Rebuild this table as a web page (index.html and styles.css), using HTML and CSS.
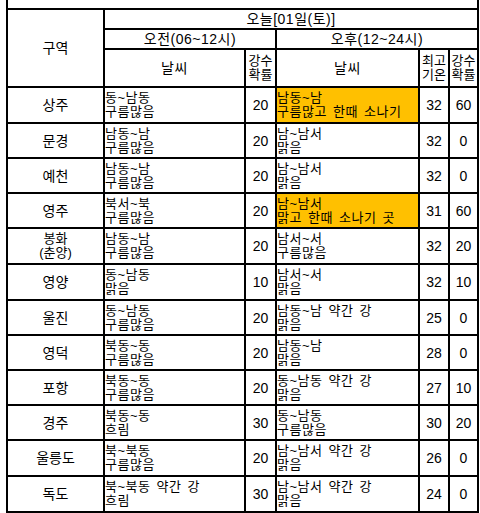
FILE: index.html
```html
<!DOCTYPE html>
<html lang="ko">
<head>
<meta charset="utf-8">
<title>오늘 날씨</title>
<link rel="stylesheet" href="styles.css">
</head>
<body>
<table class="wx">
  <colgroup>
    <col class="c-area"><col class="c-am"><col class="c-amp"><col class="c-pm"><col class="c-tmax"><col class="c-pmp">
  </colgroup>
  <tr class="r-cut"><td colspan="6"></td></tr>
  <tr class="r-h1"><th rowspan="3" class="area">구역</th><th colspan="5">오늘[01일(토)]</th></tr>
  <tr class="r-h2"><th colspan="2">오전(06~12시)</th><th colspan="3">오후(12~24시)</th></tr>
  <tr class="r-h3"><th>날씨</th><th class="narrow">강수<br>확률</th><th>날씨</th><th class="narrow">최고<br>기온</th><th class="narrow">강수<br>확률</th></tr>

  <tr class="r36"><td class="area">상주</td><td class="wt">동~남동<br>구름많음</td><td class="num">20</td><td class="wt hot">남동~남<br>구름많고 한때 소나기</td><td class="num">32</td><td class="num">60</td></tr>
  <tr class="r35"><td class="area">문경</td><td class="wt">남동~남<br>구름많음</td><td class="num">20</td><td class="wt">남~남서<br>맑음</td><td class="num">32</td><td class="num">0</td></tr>
  <tr class="r35"><td class="area">예천</td><td class="wt">남동~남<br>구름많음</td><td class="num">20</td><td class="wt">남~남서<br>맑음</td><td class="num">32</td><td class="num">0</td></tr>
  <tr class="r35"><td class="area">영주</td><td class="wt">북서~북<br>구름많음</td><td class="num">20</td><td class="wt hot">남~남서<br>맑고 한때 소나기 곳</td><td class="num">31</td><td class="num">60</td></tr>
  <tr class="r36"><td class="area two">봉화<br>(춘양)</td><td class="wt">남동~남<br>구름많음</td><td class="num">20</td><td class="wt">남서~서<br>구름많음</td><td class="num">32</td><td class="num">20</td></tr>
  <tr class="r36"><td class="area">영양</td><td class="wt">동~남동<br>맑음</td><td class="num">10</td><td class="wt">남서~서<br>맑음</td><td class="num">32</td><td class="num">10</td></tr>
  <tr class="r35"><td class="area">울진</td><td class="wt">동~남동<br>구름많음</td><td class="num">20</td><td class="wt">남동~남 약간 강<br>맑음</td><td class="num">25</td><td class="num">0</td></tr>
  <tr class="r35"><td class="area">영덕</td><td class="wt">북동~동<br>구름많음</td><td class="num">20</td><td class="wt">남동~남<br>맑음</td><td class="num">28</td><td class="num">0</td></tr>
  <tr class="r35"><td class="area">포항</td><td class="wt">북동~동<br>구름많음</td><td class="num">20</td><td class="wt">동~남동 약간 강<br>맑음</td><td class="num">27</td><td class="num">10</td></tr>
  <tr class="r35"><td class="area">경주</td><td class="wt">북동~동<br>흐림</td><td class="num">30</td><td class="wt">동~남동<br>구름많음</td><td class="num">30</td><td class="num">20</td></tr>
  <tr class="r36"><td class="area">울릉도</td><td class="wt">북~북동<br>구름많음</td><td class="num">20</td><td class="wt">남~남서 약간 강<br>맑음</td><td class="num">26</td><td class="num">0</td></tr>
  <tr class="r36"><td class="area">독도</td><td class="wt">북~북동 약간 강<br>흐림</td><td class="num">30</td><td class="wt">남~남서 약간 강<br>맑음</td><td class="num">24</td><td class="num">0</td></tr>
</table>
</body>
</html>
```

FILE: styles.css
```css
html, body {
  margin: 0;
  padding: 0;
  background: #fff;
}

.wx {
  margin-left: 6px;
  width: 473px;
  table-layout: fixed;
  border-collapse: separate;
  border-spacing: 0;
  border-left: 2px solid #000;
  font-family: "Liberation Sans", "Noto Sans CJK KR", sans-serif;
  font-size: 13px;
  line-height: 14px;
  color: #000;
}

.c-area { width: 97px; }
.c-am { width: 141px; }
.c-amp { width: 31px; }
.c-pm { width: 143px; }
.c-tmax { width: 30px; }
.c-pmp { width: 29px; }

.wx td,
.wx th {
  border-right: 2px solid #000;
  border-bottom: 2px solid #000;
  padding: 0;
  font-weight: normal;
  text-align: center;
  vertical-align: middle;
  overflow: hidden;
  white-space: nowrap;
  letter-spacing: 0.5px;
  word-spacing: 2px;
}

.wx th {
  font-size: 14px;
}

.r-cut { height: 10px; }
.r-h1 { height: 20px; }
.r-h2 { height: 20px; }
.r-h3 { height: 38px; }
.r35 { height: 35px; }
.r36 { height: 36px; }

.wx .narrow {
  font-size: 13px;
  letter-spacing: 0;
  line-height: 14px;
}

.wx .area {
  font-size: 14px;
  letter-spacing: 0;
}

.wx .area.two {
  font-size: 13px;
  line-height: 14px;
}

.wx .wt {
  text-align: left;
}

.wx .hot {
  background: #ffc000;
}

.wx .num {
  font-size: 14px;
  letter-spacing: 0;
}
```
